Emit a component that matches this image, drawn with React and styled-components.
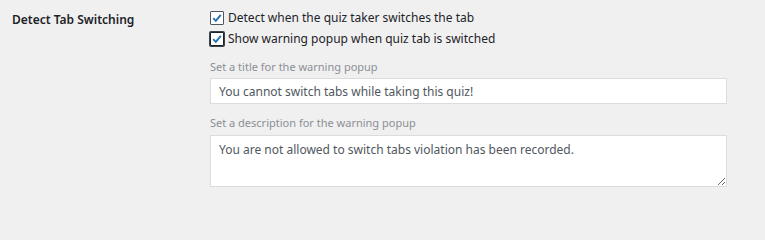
import React, { useState } from "react";
import styled, { createGlobalStyle } from "styled-components";

const GlobalStyle = createGlobalStyle`
  body {
    margin: 0;
    background: #f0f0f1;
    font-family: "Noto Sans", "Open Sans", sans-serif;
    font-size: 12px;
    color: #1d2327;
  }
`;

function App() {
  const [detect, setDetect] = useState(true);
  const [warn, setWarn] = useState(true);

  return (
    <>
      <GlobalStyle />
      <Row>
        <Heading>Detect Tab Switching</Heading>
        <Field>
          <CheckLine>
            <Box checked={detect} onClick={() => setDetect(!detect)}>
              {detect && <Tick />}
            </Box>
            Detect when the quiz taker switches the tab
          </CheckLine>
          <CheckLine>
            <Box checked={warn} focused onClick={() => setWarn(!warn)}>
              {warn && <Tick />}
            </Box>
            Show warning popup when quiz tab is switched
          </CheckLine>
          <Hint gap={9}>Set a title for the warning popup</Hint>
          <TextInput defaultValue="You cannot switch tabs while taking this quiz!" />
          <Hint gap={10}>Set a description for the warning popup</Hint>
          <TextArea defaultValue="You are not allowed to switch tabs violation has been recorded." />
        </Field>
      </Row>
    </>
  );
}

function Tick() {
  return (
    <svg width="12" height="12" viewBox="0 0 12 12">
      <path d="M2.2 6.2 L4.8 8.8 L9.8 2.8" fill="none" stroke="#2271b1" strokeWidth="1.9" />
    </svg>
  );
}

const Row = styled.div`
  display: flex;
  padding: 7px 0 0 12px;
`;

const Heading = styled.div`
  width: 198px;
  font-weight: 600;
  font-size: 12px;
  line-height: 26px;
  color: #1d2327;
`;

const Field = styled.div`
  display: flex;
  flex-direction: column;
  width: 517px;
`;

const CheckLine = styled.label`
  display: flex;
  align-items: center;
  gap: 4px;
  height: 21px;
  font-size: 12px;
  color: #1d2327;
  cursor: pointer;
`;

const Box = styled.span`
  display: flex;
  align-items: center;
  justify-content: center;
  box-sizing: border-box;
  width: 14px;
  height: 14px;
  background: #fff;
  border: 1px solid ${(p) => (p.focused ? "#1d2327" : "#50575e")};
  box-shadow: ${(p) => (p.focused ? "0 0 0 1px #3c434a" : "none")};
  border-radius: 1px;
`;

const Hint = styled.div`
  margin-top: ${(p) => p.gap}px;
  font-size: 11px;
  color: #8c8f94;
  line-height: 18px;
`;

const TextInput = styled.input`
  box-sizing: border-box;
  margin-top: 2px;
  width: 100%;
  height: 26px;
  padding: 0 8px;
  border: 1px solid #dcdcde;
  border-radius: 0;
  background: #fff;
  font-family: inherit;
  font-size: 12px;
  color: #50575e;
  outline: none;
`;

const TextArea = styled.textarea`
  box-sizing: border-box;
  margin-top: 3px;
  width: 100%;
  height: 52px;
  padding: 5px 8px;
  border: 1px solid #dcdcde;
  border-radius: 0;
  background: #fff;
  font-family: inherit;
  font-size: 12px;
  color: #50575e;
  outline: none;
`;

export default App;
